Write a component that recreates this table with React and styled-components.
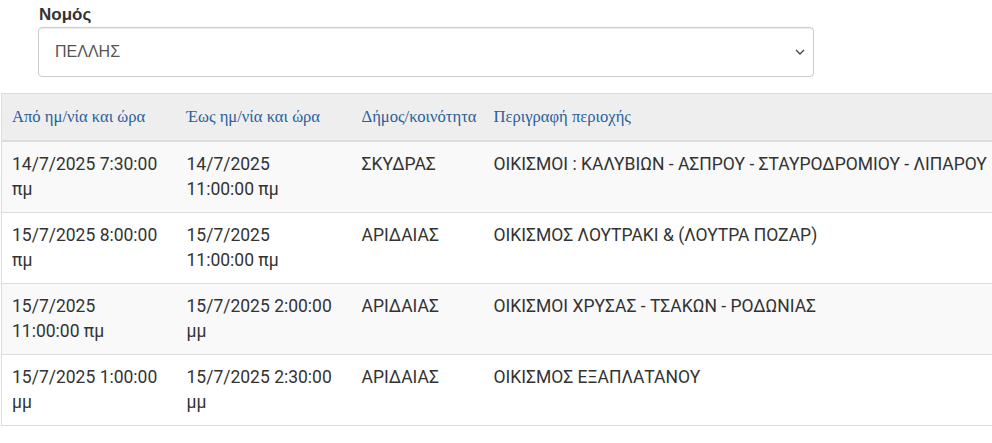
import React from "react";
import styled, { createGlobalStyle } from "styled-components";

const Global = createGlobalStyle`
  html, body { margin: 0; padding: 0; background: #fff; overflow: hidden; }
  body { font-family: Roboto, "Noto Sans", sans-serif; color: #333; }
  * { box-sizing: border-box; }
`;

const Page = styled.div`
  width: 992px;
  overflow: hidden;
  padding-top: 4px;
`;

const FormGroup = styled.div`
  margin-left: 38px;
  width: 776px;
  margin-bottom: 16px;
`;

const Label = styled.label`
  display: block;
  font-family: "Liberation Sans", Arial, sans-serif;
  font-weight: 700;
  font-size: 17px;
  line-height: 22px;
  color: #333;
  margin-left: 1px;
  margin-bottom: 1px;
`;

const SelectBox = styled.div`
  position: relative;
  height: 50px;
  border: 1px solid #ccc;
  border-radius: 4px;
  box-shadow: inset 0 1px 1px rgba(0, 0, 0, 0.075);
  display: flex;
  align-items: center;
  padding: 0 16px;
  font-family: "Liberation Sans", Arial, sans-serif;
  font-size: 16px;
  color: #555;
`;

const Chevron = styled.svg`
  position: absolute;
  right: 8px;
  top: 20px;
`;

const TableWrap = styled.div`
  padding-left: 1px;
`;

const Table = styled.table`
  width: 1160px;
  table-layout: fixed;
  border-collapse: collapse;
  border: 1px solid #ddd;
`;

const Th = styled.th`
  width: ${(p) => p.$w}px;
  text-align: left;
  font-family: "Liberation Serif", "Times New Roman", serif;
  font-weight: 400;
  font-size: 16.6px;
  line-height: 26px;
  color: #2a5f9a;
  background: #eee;
  padding: 10px 10px 10px 10px;
  border-bottom: 2px solid #ddd;
  white-space: nowrap;
  vertical-align: bottom;
`;

const Row = styled.tr`
  background: ${(p) => (p.$odd ? "#f9f9f9" : "#fff")};
`;

const Td = styled.td`
  font-size: 17.5px;
  line-height: 25px;
  color: #333;
  padding: 10px 10px 10px 10px;
  border-top: 1px solid #ddd;
  vertical-align: top;
  white-space: ${(p) => (p.$nowrap ? "nowrap" : "normal")};
`;

const rows = [
  ["14/7/2025 7:30:00 πμ", "14/7/2025 11:00:00 πμ", "ΣΚΥΔΡΑΣ", "ΟΙΚΙΣΜΟΙ : ΚΑΛΥΒΙΩΝ - ΑΣΠΡΟΥ - ΣΤΑΥΡΟΔΡΟΜΙΟΥ - ΛΙΠΑΡΟΥ"],
  ["15/7/2025 8:00:00 πμ", "15/7/2025 11:00:00 πμ", "ΑΡΙΔΑΙΑΣ", "ΟΙΚΙΣΜΟΣ ΛΟΥΤΡΑΚΙ & (ΛΟΥΤΡΑ ΠΟΖΑΡ)"],
  ["15/7/2025 11:00:00 πμ", "15/7/2025 2:00:00 μμ", "ΑΡΙΔΑΙΑΣ", "ΟΙΚΙΣΜΟΙ ΧΡΥΣΑΣ - ΤΣΑΚΩΝ - ΡΟΔΩΝΙΑΣ"],
  ["15/7/2025 1:00:00 μμ", "15/7/2025 2:30:00 μμ", "ΑΡΙΔΑΙΑΣ", "ΟΙΚΙΣΜΟΣ ΕΞΑΠΛΑΤΑΝΟΥ"],
];

export default function App() {
  return (
    <Page>
      <Global />
      <FormGroup>
        <Label>Νομός</Label>
        <SelectBox>
          ΠΕΛΛΗΣ
          <Chevron width="10" height="8" viewBox="0 0 10 8">
            <path d="M1 2 L5 6 L9 2" fill="none" stroke="#444" strokeWidth="1.3" />
          </Chevron>
        </SelectBox>
      </FormGroup>
      <TableWrap>
        <Table>
          <thead>
            <tr>
              <Th $w={175}>Από ημ/νία και ώρα</Th>
              <Th $w={175}>Έως ημ/νία και ώρα</Th>
              <Th $w={132}>Δήμος/κοινότητα</Th>
              <Th>Περιγραφή περιοχής</Th>
            </tr>
          </thead>
          <tbody>
            {rows.map((r, i) => (
              <Row key={i} $odd={i % 2 === 0}>
                <Td>{r[0]}</Td>
                <Td>{r[1]}</Td>
                <Td>{r[2]}</Td>
                <Td $nowrap>{r[3]}</Td>
              </Row>
            ))}
          </tbody>
        </Table>
      </TableWrap>
    </Page>
  );
}
